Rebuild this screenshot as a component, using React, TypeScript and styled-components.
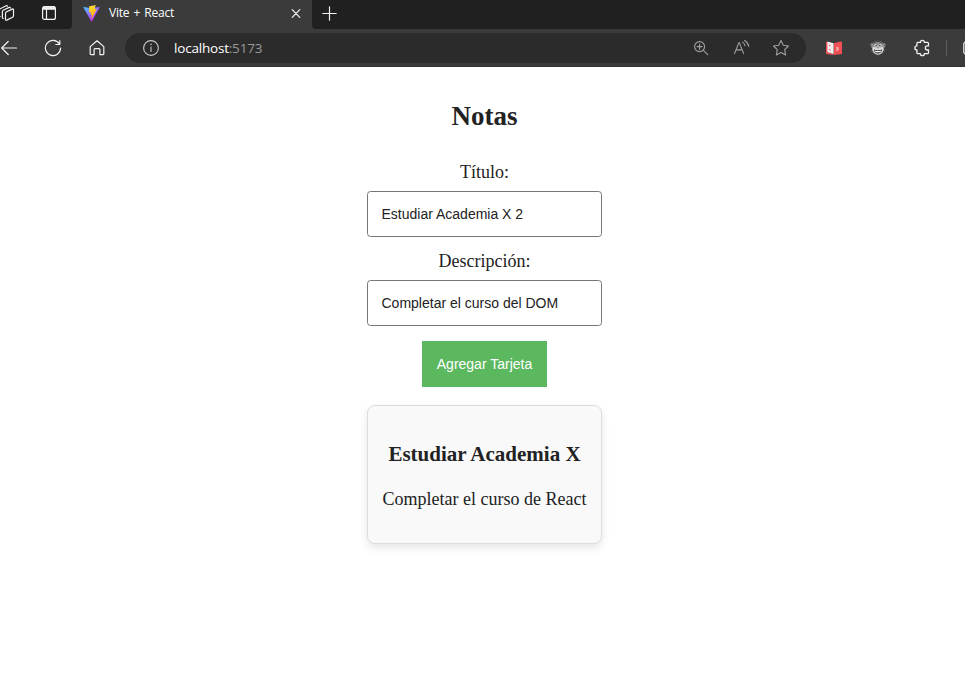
import React from "react";
import styled, { createGlobalStyle } from "styled-components";

const GlobalStyle = createGlobalStyle`
  *, *::before, *::after { box-sizing: border-box; }
  html, body { margin: 0; padding: 0; background: #fff; overflow: hidden; }
`;

const Window = styled.div`
  display: flex;
  flex-direction: column;
  width: 965px;
  height: 687px;
  overflow: hidden;
  background: #fff;
`;

const TabStrip = styled.header`
  display: flex;
  height: 29px;
  flex: none;
  background: #3b3b3b;
`;

const StripStart = styled.div`
  display: flex;
  width: 72px;
  background: #202020;
  border-bottom-right-radius: 4px;
`;

const StripEnd = styled.div`
  flex: 1;
  background: #202020;
  border-bottom-left-radius: 4px;
`;

const Slot = styled.span<{ $w: number; $h: number; $pull?: number }>`
  display: flex;
  flex: none;
  align-items: center;
  justify-content: center;
  width: ${(p) => p.$w}px;
  height: ${(p) => p.$h}px;
  margin-left: ${(p) => p.$pull ?? 0}px;
`;

const Tab = styled.div`
  display: flex;
  align-items: center;
  width: 240px;
  height: 26px;
  padding: 0 8px 0 11px;
`;

const TabTitle = styled.span`
  flex: 1;
  margin-left: 9px;
  font: 12px/18px "Open Sans", "Noto Sans", sans-serif;
  letter-spacing: -0.22px;
  word-spacing: 1.3px;
  color: #fff;
`;

const Toolbar = styled.nav`
  display: flex;
  align-items: center;
  height: 38px;
  flex: none;
  background: #3b3b3b;
  border-bottom: 1px solid #333;
`;

const AddressBar = styled.div`
  display: flex;
  align-items: center;
  flex: none;
  width: 681px;
  height: 30px;
  margin: 0 6px;
  padding: 0 5px 0 4px;
  border-radius: 15px;
  background: #2b2b2b;
`;

const Url = styled.span`
  flex: 1;
  margin-left: 1px;
  font: 13.5px/20px "Open Sans", "Noto Sans", sans-serif;
  letter-spacing: -0.2px;
  color: #fff;
`;

const Port = styled.span`
  color: #999;
`;

const Divider = styled.span`
  flex: none;
  width: 1px;
  height: 16px;
  margin: 0 16px 0 2px;
  background: #5c5c5c;
`;

const Page = styled.main`
  display: flex;
  flex-direction: column;
  align-items: center;
  padding-left: 4px;
  font-family: "Liberation Serif", "Times New Roman", serif;
  color: #222;
`;

const Heading = styled.h2`
  margin: 33px 0 27px;
  font-size: 27px;
  line-height: 32px;
`;

const Form = styled.form`
  display: flex;
  flex-direction: column;
  align-items: center;
`;

const Label = styled.label`
  margin-bottom: 6px;
  font-size: 18px;
  line-height: 26px;
`;

const Input = styled.input`
  width: 235px;
  height: 46px;
  margin-bottom: 11px;
  padding: 0 13.5px;
  border: 1px solid #767676;
  border-radius: 3.5px;
  outline: none;
  background: #fff;
  color: #222;
  font: 14px "Liberation Sans", Arial, sans-serif;
`;

const Button = styled.button`
  width: 125px;
  height: 46px;
  margin-top: 4px;
  padding: 0;
  border: 0;
  background: #5cb85f;
  color: #fff;
  font: 14px "Liberation Sans", Arial, sans-serif;
`;

const Card = styled.article`
  width: 235px;
  height: 139px;
  margin-top: 18px;
  padding-top: 35px;
  border: 1px solid #ddd;
  border-radius: 8px;
  background: #f9f9f9;
  box-shadow: 0 4px 9px rgba(0, 0, 0, 0.1);
  text-align: center;
  white-space: nowrap;
`;

const CardTitle = styled.h3`
  margin: 0 0 19px;
  font-size: 21px;
  line-height: 26px;
`;

const CardText = styled.p`
  margin: 0;
  font-size: 18px;
  line-height: 26px;
`;

type LineIconProps = { size: number; color?: string; stroke?: number; children: React.ReactNode };

const LineIcon = ({ size, color = "#f2f2f2", stroke = 1.1, children }: LineIconProps) => (
  <svg width={size} height={size} viewBox={`0 0 ${size} ${size}`} fill="none" stroke={color}
    strokeWidth={stroke} strokeLinecap="round" strokeLinejoin="round">
    {children}
  </svg>
);

const WorkspacesIcon = () => (
  <LineIcon size={18} stroke={1.2}>
    <path d="M9.2 8 15.2 5.1q1.3-.5 1.3.8v5.9q0 1-.9 1.4l-5.8 2.9q-1.3.5-1.3-.8V9.3q0-.9.7-1.3Z" />
    <path d="M6.2 14.4q-.8 0-.8-1V7.6q0-.9.8-1.3l6-2.9q.9-.4 1.3.5" />
    <path d="M3.2 12.6q-.8 0-.8-1V6q0-.9.8-1.3l6-2.9q.9-.4 1.3.4" />
  </LineIcon>
);

const VerticalTabsIcon = () => (
  <LineIcon size={16} stroke={1.2}>
    <rect x="1.6" y="1.6" width="12.8" height="12.8" rx="2" />
    <path d="M2.4 2.2h11.2v1.9H2.4Z" fill="#f2f2f2" />
    <path d="M5.5 4v10" />
  </LineIcon>
);

const ViteIcon = () => (
  <svg width="17" height="17" viewBox="0 0 410 404">
    <defs>
      <linearGradient id="viteBody" x1="6" y1="33" x2="235" y2="344" gradientUnits="userSpaceOnUse">
        <stop stopColor="#41d1ff" />
        <stop offset="1" stopColor="#bd34fe" />
      </linearGradient>
      <linearGradient id="viteBolt" x1="194" y1="9" x2="236" y2="293" gradientUnits="userSpaceOnUse">
        <stop stopColor="#ffea83" />
        <stop offset=".08" stopColor="#ffdd35" />
        <stop offset="1" stopColor="#ffa800" />
      </linearGradient>
    </defs>
    <path fill="url(#viteBody)" d="m400 60-184 329c-4 7-14 7-18 0L11 60c-5-8 2-17 11-15l184 32 180-32c9-2 18 7 14 15Z" />
    <path fill="url(#viteBolt)" d="M293 2 156 28c-2 1-4 3-4 5l-8 142c0 4 3 6 6 5l38-8c4-1 7 2 6 6l-11 55c-1 4 3 7 6 6l24-7c3-1 7 2 6 6l-18 87c-1 6 6 8 9 4l119-230c2-3-1-7-5-7l-39 8c-4 1-7-3-6-7l26-89c1-3-2-7-6-6Z" />
  </svg>
);

const StarIcon = () => (
  <LineIcon size={18} color="#a0a0a0">
    <path d="m9 1.5 2.3 4.8 5.2.7-3.8 3.7.9 5.4L9 13.6l-4.6 2.5.9-5.4L1.5 7l5.2-.7Z" />
  </LineIcon>
);

const BookIcon = () => (
  <svg width="16" height="14" viewBox="0 0 16 14">
    <path fill="#f05053" d="M0 1h2v10l6 2.5L14 11V1h2v12l-8 1-8-1Z" />
    <path fill="#f7eeee" d="m1.4.5 6.2 1.8V13l-6.2-2Z" />
    <path fill="#f05053" d="m8 2.3 7-2v10.9L8 13.5Z" />
    <path fill="none" stroke="#f05053" strokeWidth="1" d="M3 4.3l1.5.4M3.2 8.2l1.5 1.2" />
    <path fill="none" stroke="#ffc9c9" strokeWidth="1.1" d="m10 7 1.8-.4.3 1.6-1.4 1V10" />
  </svg>
);

const MascotIcon = () => (
  <svg width="16" height="16" viewBox="0 0 16 16">
    <circle cx="1.9" cy="4.6" r="1.7" fill="#777" />
    <circle cx="14.1" cy="4.6" r="1.7" fill="#777" />
    <circle cx="8" cy="8" r="7.2" fill="#8f8f8f" />
    <path d="M3.6 3.4Q8-.6 12.4 3.4" fill="none" stroke="#3a3a3a" />
    <path d="M1.2 7.5q.5 5.5 4.3 7.2M14.8 7.5q-.5 5.5-4.3 7.2" fill="none" stroke="#2e2e2e" />
    <ellipse cx="8" cy="9.5" rx="5.6" ry="4.8" fill="#d8d8d8" />
    <circle cx="5.6" cy="5.2" r="1.8" fill="#e8e8e8" stroke="#444" strokeWidth=".5" />
    <circle cx="10.4" cy="5.2" r="1.8" fill="#e8e8e8" stroke="#444" strokeWidth=".5" />
    <circle cx="6" cy="5.4" r=".7" fill="#111" />
    <circle cx="10" cy="5.4" r=".7" fill="#111" />
    <path d="M6.8 7.5h2.4L8 8.6Z" fill="#444" />
    <path d="M3.9 9.4q4.1 1.6 8.2 0-.6 4-4.1 4t-4.1-4Z" fill="#333" />
    <path d="M4.9 10.4q3.1 1.1 6.2 0l-.5 1.5q-2.6.8-5.2 0Z" fill="#fff" />
  </svg>
);

const Browser = () => (
  <>
    <TabStrip>
      <StripStart>
        <Slot $w={36} $h={26} $pull={-12}><WorkspacesIcon /></Slot>
        <Slot $w={36} $h={26} $pull={7}><VerticalTabsIcon /></Slot>
      </StripStart>
      <Tab>
        <ViteIcon />
        <TabTitle>Vite + React</TabTitle>
        <Slot $w={16} $h={26}>
          <LineIcon size={10} stroke={1.2}><path d="m1.2 1.7 7.6 7.6M8.8 1.7 1.2 9.3" /></LineIcon>
        </Slot>
      </Tab>
      <StripEnd>
        <Slot $w={35} $h={26}>
          <LineIcon size={15} stroke={1.2}><path d="M7.5.8v13.4M.8 7.5h13.4" /></LineIcon>
        </Slot>
      </StripEnd>
    </TabStrip>
    <Toolbar>
      <Slot $w={44} $h={30} $pull={-13}>
        <LineIcon size={18} stroke={1.2}><path d="M16.5 9H1.7M8.2 2.5 1.7 9l6.5 6.5" /></LineIcon>
      </Slot>
      <Slot $w={44} $h={30}>
        <LineIcon size={18} stroke={1.2}><path d="M15.5 5A7.6 7.6 0 1 0 16.6 9M15.8 1.5v4h-4" /></LineIcon>
      </Slot>
      <Slot $w={44} $h={30}>
        <LineIcon size={18} stroke={1.2}>
          <path d="M2.2 7.6 9 1.8l6.8 5.8v7.2a.9.9 0 0 1-.9.9h-3V10.6a.9.9 0 0 0-.9-.9H7a.9.9 0 0 0-.9.9v5.1h-3a.9.9 0 0 1-.9-.9Z" />
        </LineIcon>
      </Slot>
      <AddressBar>
        <Slot $w={44} $h={30}>
          <LineIcon size={18} color="#c8c8c8"><circle cx="9" cy="9" r="7.4" /><path d="M9 8v4.5" /><path d="M9 5.3v.3" strokeWidth="1.5" /></LineIcon>
        </Slot>
        <Url>localhost<Port>:5173</Port></Url>
        <Slot $w={40} $h={30}>
          <LineIcon size={16} color="#a0a0a0"><circle cx="6.6" cy="6.6" r="5" /><path d="m10.4 10.4 4.3 4.3M4 6.6h5.2M6.6 4v5.2" /></LineIcon>
        </Slot>
        <Slot $w={40} $h={30}>
          <LineIcon size={18} color="#a0a0a0">
            <path d="m2.5 14.6 4.4-11h.4l4.4 11M4 10.9h6.2M10.6 3.1q2 1.2 2.3 3.6M12.6 1.4q3.6 2 4.2 6" />
          </LineIcon>
        </Slot>
        <Slot $w={40} $h={30}><StarIcon /></Slot>
      </AddressBar>
      <Slot $w={44} $h={30}><BookIcon /></Slot>
      <Slot $w={44} $h={30}><MascotIcon /></Slot>
      <Slot $w={44} $h={30}>
        <LineIcon size={18} stroke={1.3}>
          <path d="M4.9 3.4h2.5a2 2 0 0 1 4 0h3.1a1 1 0 0 1 1 1v2.5h-1.1a2 2 0 0 0 0 4.1h1.1v2.7a1 1 0 0 1-1 1h-3.1a2 2 0 0 1-4 0H4.9a1 1 0 0 1-1-1V11a2.05 2.05 0 0 1 0-4.1V4.4a1 1 0 0 1 1-1Z" />
        </LineIcon>
      </Slot>
      <Divider />
      <Slot $w={16} $h={30}>
        <LineIcon size={16} stroke={1.2}><rect x=".8" y="2" width="14" height="12" rx="2" /></LineIcon>
      </Slot>
    </Toolbar>
  </>
);

export default function App() {
  return (
    <Window>
      <GlobalStyle />
      <Browser />
      <Page>
        <Heading>Notas</Heading>
        <Form onSubmit={(e) => e.preventDefault()}>
          <Label htmlFor="titulo">Título:</Label>
          <Input id="titulo" defaultValue="Estudiar Academia X 2" />
          <Label htmlFor="descripcion">Descripción:</Label>
          <Input id="descripcion" defaultValue="Completar el curso del DOM" />
          <Button type="submit">Agregar Tarjeta</Button>
        </Form>
        <Card>
          <CardTitle>Estudiar Academia X</CardTitle>
          <CardText>Completar el curso de React</CardText>
        </Card>
      </Page>
    </Window>
  );
}
